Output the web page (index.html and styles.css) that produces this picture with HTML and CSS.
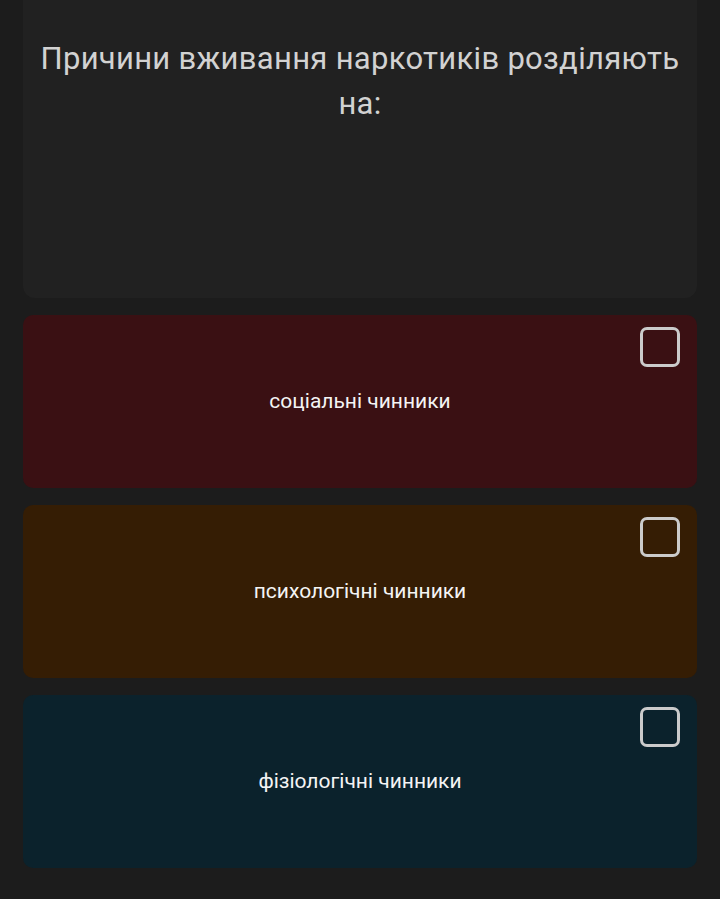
FILE: index.html
```html
<!DOCTYPE html>
<html lang="uk">
<head>
    <meta charset="UTF-8">
    <meta name="viewport" content="width=device-width, initial-scale=1.0">
    <title>Питання</title>
    <link rel="stylesheet" href="styles.css">
</head>
<body>

<div class="quiz">
    <div class="question-card">
        <div class="question-text">Причини вживання наркотиків розділяють на:</div>
    </div>

    <div class="answers">
        <div class="answer answer-red">
            <span class="check"></span>
            <div class="answer-text">соціальні чинники</div>
        </div>
        <div class="answer answer-orange">
            <span class="check"></span>
            <div class="answer-text">психологічні чинники</div>
        </div>
        <div class="answer answer-blue">
            <span class="check"></span>
            <div class="answer-text">фізіологічні чинники</div>
        </div>
    </div>
</div>

</body>
</html>
```

FILE: styles.css
```css
body {
    margin: 0;
    background: #1c1c1c;
    font-family: Roboto, 'Noto Sans', sans-serif;
    height: 899px;
    overflow: hidden;
}
.quiz {
    padding: 0 23px;
}
.question-card {
    background: #212121;
    height: 298px;
    border-radius: 0 0 12px 12px;
    box-sizing: border-box;
    padding: 36px 8px 0;
}
.question-text {
    color: #d2d2d2;
    font-size: 31px;
    line-height: 45px;
    text-align: center;
    letter-spacing: 0.3px;
}
.answers {
    display: flex;
    flex-direction: column;
    gap: 17px;
    margin-top: 17px;
}
.answer {
    position: relative;
    height: 173px;
    border-radius: 10px;
    display: flex;
    align-items: center;
    justify-content: center;
}
.answer-red {
    background: #3a1013;
}
.answer-orange {
    background: #351d04;
}
.answer-blue {
    background: #0b222c;
}
.answer-text {
    color: #f4f4f4;
    font-size: 21px;
    margin-top: -2px;
}
.check {
    position: absolute;
    top: 12px;
    right: 17px;
    width: 34px;
    height: 34px;
    border: 3px solid #cbcbcb;
    border-radius: 7px;
}
```
